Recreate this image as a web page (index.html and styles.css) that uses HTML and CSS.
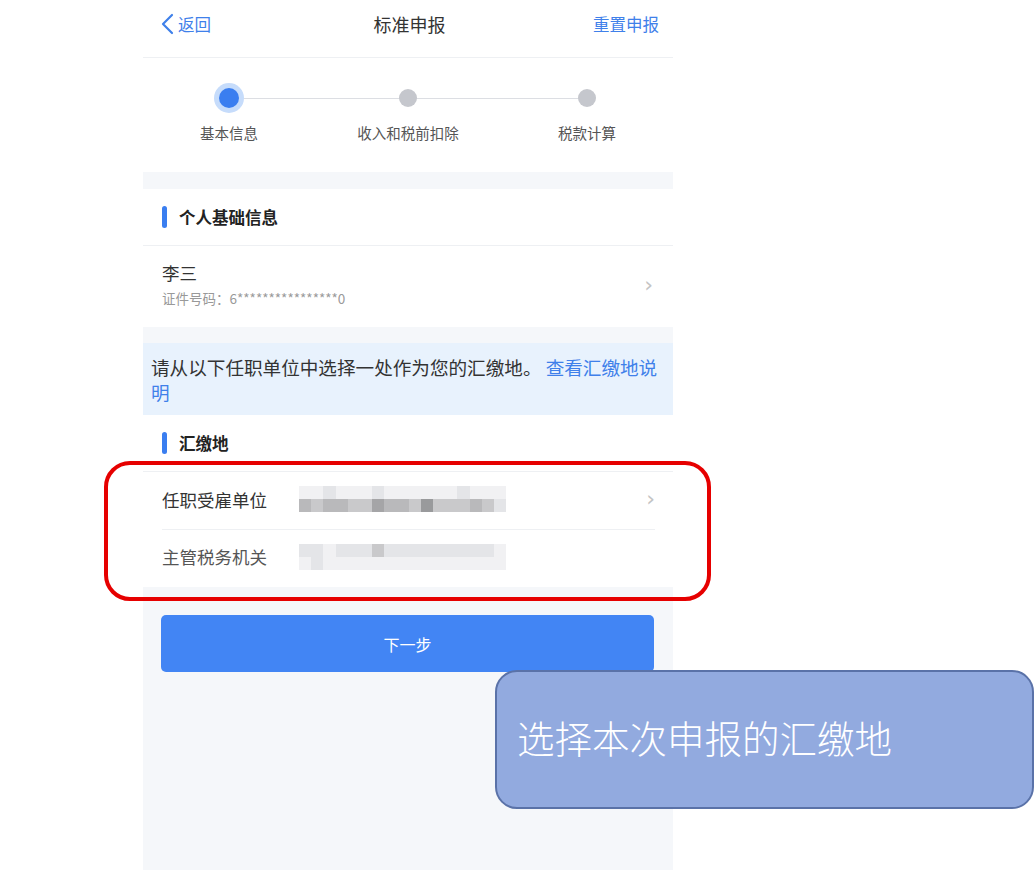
FILE: index.html
```html
<!DOCTYPE html>
<html lang="zh-CN">
<head>
  <meta charset="UTF-8" />
  <meta name="viewport" content="width=device-width, initial-scale=1.0"/>
  <title>标准申报</title>
  <link rel="stylesheet" href="styles.css">
</head>
<body>

<div class="phone">
  <!-- Top bar -->
  <div class="topbar">
    <div class="back">
      <svg width="14" height="22" viewBox="0 0 14 22"><path d="M12 2 L3 11 L12 20" fill="none" stroke="#3f80ea" stroke-width="2.2" stroke-linecap="round" stroke-linejoin="round"/></svg>
      <span>返回</span>
    </div>
    <div class="title">标准申报</div>
    <div class="reset">重置申报</div>
  </div>

  <!-- Steps -->
  <div class="steps">
    <div class="step active">
      <span class="dot"></span>
      <span class="step-label">基本信息</span>
    </div>
    <div class="step">
      <span class="dot"></span>
      <span class="step-label">收入和税前扣除</span>
    </div>
    <div class="step">
      <span class="dot"></span>
      <span class="step-label">税款计算</span>
    </div>
  </div>

  <!-- Personal info -->
  <div class="section">
    <div class="section-head"><span class="bar"></span>个人基础信息</div>
    <div class="person">
      <div>
        <div class="name">李三</div>
        <div class="idno">证件号码：6****************0</div>
      </div>
      <span class="chev">›</span>
    </div>
  </div>

  <div class="notice">
    请从以下任职单位中选择一处作为您的汇缴地。 <span class="link">查看汇缴地说明</span>
  </div>

  <!-- Payment place -->
  <div class="section">
    <div class="section-head"><span class="bar"></span>汇缴地</div>
    <div class="rows">
      <div class="row">
        <span class="row-label">任职受雇单位</span>
        <div class="mosaic dark">
          <div class="mrow">
            <i class="s1"></i><i class="s1"></i><i class="s2"></i><i class="s1"></i><i class="s1"></i><i class="s1"></i><i class="s2"></i><i class="s1"></i><i class="s1"></i><i class="s1"></i><i class="s1"></i><i class="s1"></i><i class="s1"></i><i class="s2"></i><i class="s1"></i><i class="s1"></i><i class="s1"></i>
          </div>
          <div class="mrow">
            <i class="s4"></i><i class="s3"></i><i class="s4"></i><i class="s4"></i><i class="s3"></i><i class="s3"></i><i class="s5"></i><i class="s4"></i><i class="s4"></i><i class="s3"></i><i class="s6"></i><i class="s3"></i><i class="s3"></i><i class="s3"></i><i class="s4"></i><i class="s3"></i><i class="s2"></i>
          </div>
        </div>
        <span class="chev">›</span>
      </div>
      <div class="row">
        <span class="row-label light">主管税务机关</span>
        <div class="mosaic">
          <div class="mrow">
            <i class="s2"></i><i class="s2"></i><i class="s1"></i><i class="s2"></i><i class="s2"></i><i class="s2"></i><i class="s3"></i><i class="s2"></i><i class="s2"></i><i class="s2"></i><i class="s2"></i><i class="s2"></i><i class="s2"></i><i class="s2"></i><i class="s2"></i><i class="s2"></i><i class="s1"></i>
          </div>
          <div class="mrow">
            <i class="s1"></i><i class="s2"></i><i class="s1"></i><i class="s1"></i><i class="s1"></i><i class="s1"></i><i class="s1"></i><i class="s1"></i><i class="s1"></i><i class="s1"></i><i class="s1"></i><i class="s1"></i><i class="s1"></i><i class="s1"></i><i class="s1"></i><i class="s1"></i><i class="s1"></i>
          </div>
        </div>
      </div>
    </div>
  </div>

  <div class="actions">
    <button class="next">下一步</button>
  </div>
</div>

<!-- Annotations -->
<div class="highlight"></div>
<div class="callout">选择本次申报的汇缴地</div>

</body>
</html>
```

FILE: styles.css
```css
* { box-sizing: border-box; }
body {
  margin: 0;
  background: #fff;
  font-family: "Noto Sans CJK SC", "Noto Sans", sans-serif;
  color: #333;
}

.phone {
  width: 530px;
  height: 870px;
  margin-left: 143px;
  background: #f5f7fa;
}

/* top bar */
.topbar {
  height: 58px;
  background: #fff;
  border-bottom: 1px solid #eef0f3;
  display: flex;
  align-items: center;
  justify-content: space-between;
  padding: 0 14px 9px 17px;
}
.back {
  display: flex;
  align-items: center;
  gap: 4px;
  color: #3f80ea;
  font-size: 16.5px;
  width: 120px;
}
.title {
  font-size: 18px;
  color: #333;
}
.reset {
  width: 120px;
  text-align: right;
  color: #3f80ea;
  font-size: 16.5px;
}

/* steps */
.steps {
  height: 114px;
  background: #fff;
  display: flex;
  justify-content: space-between;
  padding: 25px 56px 0;
  position: relative;
}
.steps::before {
  content: "";
  position: absolute;
  left: 86px;
  right: 86px;
  top: 40px;
  height: 1px;
  background: #dcdee3;
}
.step {
  width: 60px;
  display: flex;
  flex-direction: column;
  align-items: center;
  position: relative;
}
.dot {
  width: 30px;
  height: 30px;
  border-radius: 50%;
  display: flex;
  align-items: center;
  justify-content: center;
}
.dot::after {
  content: "";
  width: 18px;
  height: 18px;
  border-radius: 50%;
  background: #c5c7cd;
}
.step.active .dot { background: #c6dcfb; }
.step.active .dot::after {
  width: 20px;
  height: 20px;
  background: #3a7ef0;
}
.step-label {
  margin-top: 9px;
  font-size: 14.5px;
  color: #555;
  white-space: nowrap;
}

/* sections */
.section {
  background: #fff;
  margin-top: 17px;
}
.notice + .section { margin-top: 0; }
.section-head {
  height: 57px;
  display: flex;
  align-items: center;
  gap: 12px;
  padding-left: 19px;
  font-size: 16.5px;
  font-weight: bold;
  color: #222;
  border-bottom: 1px solid #eef0f3;
}
.bar {
  width: 5px;
  height: 22px;
  border-radius: 3px;
  background: #3a7ef0;
}

.person {
  height: 81px;
  display: flex;
  align-items: center;
  justify-content: space-between;
  padding: 0 20px 4px 19px;
}
.name {
  font-size: 17.5px;
  color: #333;
  line-height: 24px;
}
.idno {
  font-size: 13.5px;
  color: #999;
  line-height: 20px;
  margin-top: 3px;
}
.chev {
  color: #c4c4c4;
  font-size: 22px;
  line-height: 1;
  font-family: "DejaVu Sans", sans-serif;
}

.notice {
  margin-top: 16px;
  background: #e8f2fd;
  padding: 11px 10px 11px 8px;
  font-size: 18.6px;
  line-height: 25px;
  color: #333;
}
.link { color: #3f80ea; }

/* rows */
.rows { padding: 0 18px 1px 19px; }
.row {
  height: 57px;
  display: flex;
  align-items: center;
  padding-bottom: 3px;
}
.row + .row { border-top: 1px solid #eef0f3; }
.row-label {
  width: 137px;
  font-size: 17.5px;
  color: #333;
}
.row-label.light { color: #555; }
.row .chev { margin-left: auto; }

.mosaic {
  display: flex;
  flex-direction: column;
}
.mrow { display: flex; }
.mrow i {
  width: 12.2px;
  height: 13px;
  background: #eee;
}
.mrow .s1 { background: #f1f1f3; }
.mrow .s2 { background: #e4e5e8; }
.mrow .s3 { background: #c9c9cb; }
.mrow .s4 { background: #b9b9bb; }
.mrow .s5 { background: #a5a5a7; }
.mrow .s6 { background: #999a9c; }

.actions {
  padding: 28px 19px 0 18px;
}
.next {
  width: 100%;
  height: 57px;
  border: none;
  border-radius: 5px;
  background: #4285f4;
  color: #fff;
  font-family: inherit;
  font-size: 16px;
}

/* annotations */
.highlight {
  position: absolute;
  left: 104px;
  top: 461px;
  width: 607px;
  height: 140px;
  border: 4px solid #e60000;
  border-radius: 26px;
}
.callout {
  position: absolute;
  left: 495px;
  top: 670px;
  width: 539px;
  height: 139px;
  background: #92aadf;
  border: 2px solid #5a72a8;
  border-radius: 22px;
  color: #fff;
  font-size: 37.5px;
  font-weight: 300;
  display: flex;
  align-items: center;
  padding-left: 20px;
  padding-bottom: 6px;
}
```
